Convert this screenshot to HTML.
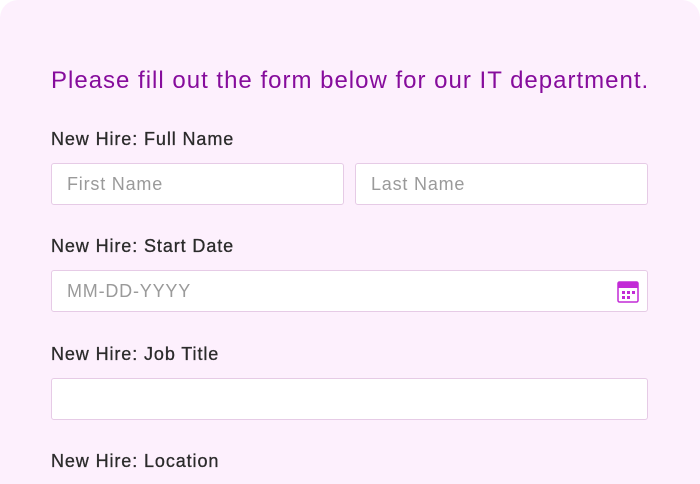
<!DOCTYPE html>
<html><head><style>
html,body{margin:0;width:700px;height:484px;overflow:hidden;background:#fff;font-family:"Liberation Sans",sans-serif;}
.card{position:absolute;left:0;top:0;width:700px;height:484px;background:#fdf0fd;border-radius:18px 18px 0 0;}
.t{position:absolute;left:51px;top:67px;font-size:24px;letter-spacing:1px;color:#860c9c;white-space:nowrap;}
.l{position:absolute;left:51px;font-size:18px;letter-spacing:0.9px;color:#2b2b2b;white-space:nowrap;-webkit-text-stroke:0.3px #2b2b2b;}
.i{position:absolute;height:40px;background:#fff;border:1px solid #e6cbe6;border-radius:3px;box-sizing:content-box;}
.p{position:absolute;left:15px;top:10px;font-size:18px;letter-spacing:0.8px;color:#9a9a9a;}
</style></head><body>
<div class="card">
<div class="t">Please fill out the form below for our IT department.</div>
<div class="l" style="top:129px">New Hire: Full Name</div>
<div class="i" style="left:51px;top:163px;width:291px"><span class="p">First Name</span></div>
<div class="i" style="left:355px;top:163px;width:291px"><span class="p">Last Name</span></div>
<div class="l" style="top:236px">New Hire: Start Date</div>
<div class="i" style="left:51px;top:270px;width:595px"><span class="p">MM-DD-YYYY</span>
<svg style="position:absolute;left:565px;top:10px" width="22" height="22" viewBox="0 0 22 22">
<rect x="1" y="1" width="20" height="20" rx="1.5" fill="#fff" stroke="#c22ad6" stroke-width="1.5"/>
<rect x="1" y="1" width="20" height="6" fill="#c22ad6"/>
<g fill="#c22ad6"><rect x="5" y="10" width="3" height="3"/><rect x="10" y="10" width="3" height="3"/><rect x="15" y="10" width="3" height="3"/><rect x="5" y="15" width="3" height="3"/><rect x="10" y="15" width="3" height="3"/></g>
</svg></div>
<div class="l" style="top:344px">New Hire: Job Title</div>
<div class="i" style="left:51px;top:378px;width:595px"></div>
<div class="l" style="top:451px">New Hire: Location</div>
</div>
</body></html>
